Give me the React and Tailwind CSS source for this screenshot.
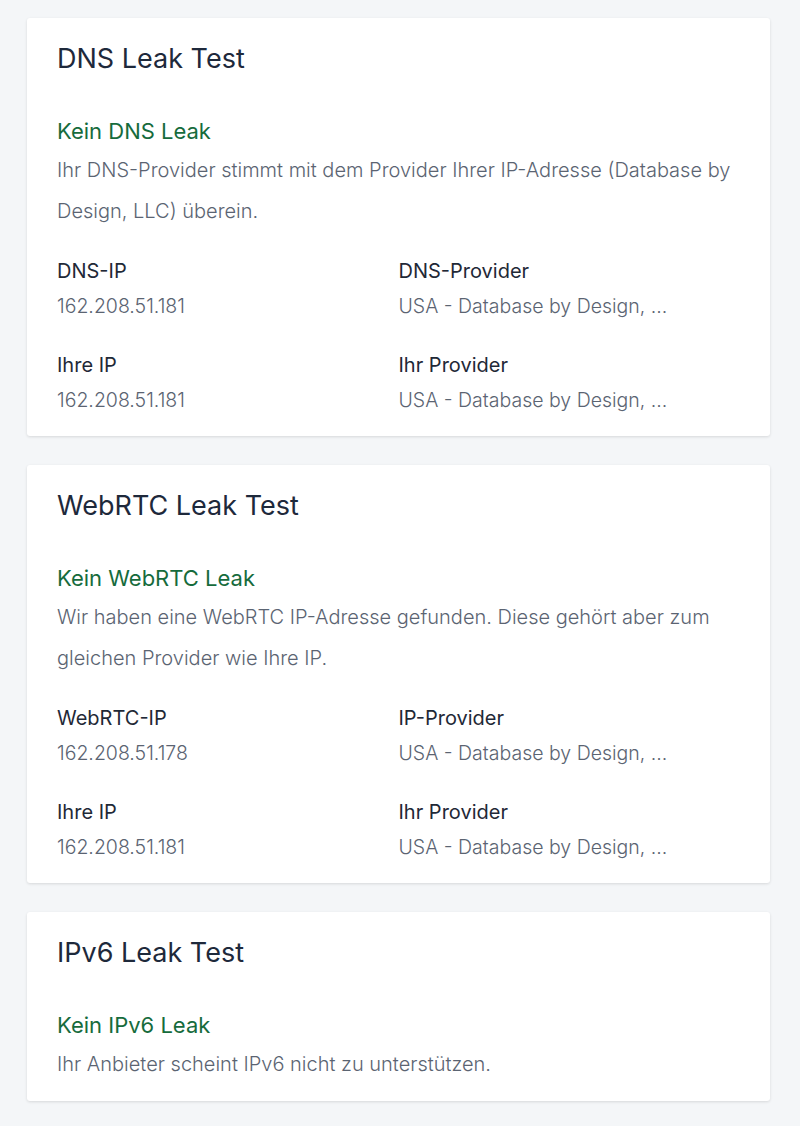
const cards = [
	{
		title: "DNS Leak Test",
		status: "Kein DNS Leak",
		text: "Ihr DNS-Provider stimmt mit dem Provider Ihrer IP-Adresse (Database by Design, LLC) überein.",
		rows: [
			[["DNS-IP", "162.208.51.181"], ["DNS-Provider", "USA - Database by Design, ..."]],
			[["Ihre IP", "162.208.51.181"], ["Ihr Provider", "USA - Database by Design, ..."]],
		],
	},
	{
		title: "WebRTC Leak Test",
		status: "Kein WebRTC Leak",
		text: "Wir haben eine WebRTC IP-Adresse gefunden. Diese gehört aber zum gleichen Provider wie Ihre IP.",
		rows: [
			[["WebRTC-IP", "162.208.51.178"], ["IP-Provider", "USA - Database by Design, ..."]],
			[["Ihre IP", "162.208.51.181"], ["Ihr Provider", "USA - Database by Design, ..."]],
		],
	},
	{
		title: "IPv6 Leak Test",
		status: "Kein IPv6 Leak",
		text: "Ihr Anbieter scheint IPv6 nicht zu unterstützen.",
		rows: [],
	},
]

const LeakCard = ({ card }) => {
	const hasRows = card.rows.length > 0
	return (
		<div className={`bg-white rounded-[3px] shadow-[0_1px_3px_rgba(0,0,0,0.12)] px-[30px] pt-[23px] ${hasRows ? "pb-[21px]" : "pb-[16px]"}`}>
			<h2 className="text-[27px] leading-[36px] text-[#1e293b]">{card.title}</h2>
			<div className="mt-[39px] text-[22px] leading-[30px] text-[#166b3c]">{card.status}</div>
			<p className="mt-[4px] text-[20px] leading-[41px] font-light text-[#5b6472]">{card.text}</p>
			{hasRows && (
				<div className="mt-[24px] flex flex-col gap-[29px]">
					{card.rows.map((row, i) => (
						<div key={i} className="grid grid-cols-2">
							{row.map(([label, value]) => (
								<div key={label}>
									<div className="text-[20px] leading-[30px] text-[#1f2937]">{label}</div>
									<div className="mt-[5px] text-[19.5px] leading-[30px] font-light text-[#5b6472]">{value}</div>
								</div>
							))}
						</div>
					))}
				</div>
			)}
		</div>
	)
}

export default function App() {
	return (
		<div className="min-h-[1126px] bg-[#f4f6f8] pl-[27px] pr-[30px] pt-[18px] pb-[26px] flex flex-col gap-[29px] font-['Inter',sans-serif]">
			{cards.map(card => (
				<LeakCard key={card.title} card={card} />
			))}
		</div>
	)
}
